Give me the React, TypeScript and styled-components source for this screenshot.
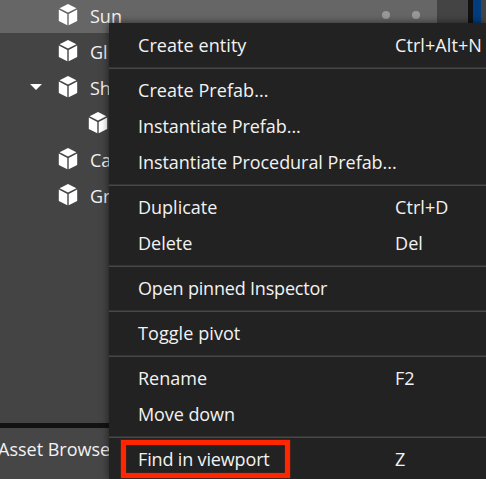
import React from "react";
import styled, { createGlobalStyle } from "styled-components";

const GlobalStyle = createGlobalStyle`
  * { box-sizing: border-box; }
  html, body { margin: 0; overflow: hidden; background: #444; }
`;

const Editor = styled.div`
  position: relative;
  display: flex;
  flex-direction: column;
  width: 486px;
  height: 479px;
  overflow: hidden;
  background: #121212;
  color: #f2f2f2;
  font: 18px/36px "Open Sans", sans-serif;
  white-space: nowrap;
`;

const Workspace = styled.div`
  display: flex;
  height: 423px;
  gap: 5px;
`;

const Hierarchy = styled.div`
  width: 468px;
  height: 423px;
  overflow: hidden;
  background: #444;
`;

const Viewport = styled.div`
  width: 13px;
  background: #003d7e;
  border-right: 5px solid #444;
`;

const TreeRow = styled.div<{ $depth?: number; $selected?: boolean }>`
  display: flex;
  align-items: flex-start;
  width: 437px;
  height: ${(p) => (p.$selected ? 33 : 36)}px;
  padding-top: ${(p) => (p.$selected ? 4 : 7)}px;
  padding-left: ${(p) => (p.$depth ? 60 : 30)}px;
  background: ${(p) => (p.$selected ? "#666" : "transparent")};
`;

const ArrowSlot = styled.span`
  display: flex;
  width: 28px;
  padding-top: 8px;
`;

const EntityName = styled.span`
  flex: 1;
  margin-left: 12px;
  line-height: 24px;
`;

const Dots = styled.span`
  display: flex;
  gap: 22px;
  margin-right: 17px;
  padding-top: 7px;
`;

const Dot = styled.i`
  width: 8px;
  height: 8px;
  border-radius: 50%;
  background: #999;
`;

const AssetPanel = styled.div`
  flex: 1;
  margin-top: 5px;
  padding-top: 3px;
  background: #464646;
  text-indent: -2px;
`;

const Menu = styled.div`
  position: absolute;
  left: 109px;
  top: 23px;
  width: 377px;
  height: 456px;
  padding-top: 4px;
  background: #222;
  box-shadow: 0 0 8px rgba(0, 0, 0, 0.6);
`;

const MenuItem = styled.div`
  display: grid;
  grid-template-columns: 257px 1fr;
  height: 36px;
  padding-left: 29px;
`;

const Label = styled.span<{ $tracking?: number }>`
  letter-spacing: ${(p) => p.$tracking ?? 0}px;
`;

const Shortcut = styled.span`
  letter-spacing: 0.08px;
`;

const Separator = styled.div`
  height: 9px;
  padding-top: 4px;

  &::before {
    content: "";
    display: block;
    height: 1px;
    background: #484848;
    border-top: 1px solid #343434;
  }
`;

const Highlight = styled.div`
  position: absolute;
  left: 12px;
  top: 417px;
  width: 169px;
  height: 38px;
  border: 5px solid #ff2600;
  box-shadow: 0 0 1px #ff2600, inset 0 0 1px #ff2600;
`;

const CubeIcon = () => (
  <svg width="20" height="22" viewBox="0 0 20 22" fill="#fff">
    <path d="M10 0 18.4 4.2 10 8.6 1.6 4.2Z" />
    <path d="M.8 5.6 9.3 10V21.3L.8 16.9Z" />
    <path d="M19.2 5.6 10.7 10V21.3L19.2 16.9Z" />
  </svg>
);

const Entity = ({ name, depth, selected, open }: {
  name?: string; depth?: number; selected?: boolean; open?: boolean;
}) => (
  <TreeRow $depth={depth} $selected={selected}>
    <ArrowSlot>
      {open && (
        <svg width="12" height="6" viewBox="0 0 12 6"><path d="M0 0H12L6 6Z" fill="#fff" /></svg>
      )}
    </ArrowSlot>
    <CubeIcon />
    <EntityName>{name}</EntityName>
    {selected && <Dots><Dot /><Dot /></Dots>}
  </TreeRow>
);

type Item = { label: string; keys?: string; tracking?: number };

const groups: Item[][] = [
  [{ label: "Create entity", keys: "Ctrl+Alt+N", tracking: 0.07 }],
  [
    { label: "Create Prefab...", tracking: 0.06 },
    { label: "Instantiate Prefab...", tracking: -0.05 },
    { label: "Instantiate Procedural Prefab...", tracking: -0.05 },
  ],
  [{ label: "Duplicate", keys: "Ctrl+D" }, { label: "Delete", keys: "Del" }],
  [{ label: "Open pinned Inspector", tracking: -0.19 }],
  [{ label: "Toggle pivot", tracking: 0.08 }],
  [{ label: "Rename", keys: "F2" }, { label: "Move down", tracking: -0.08 }],
  [{ label: "Find in viewport", keys: "Z", tracking: -0.15 }],
];

export default function App() {
  return (
    <>
      <GlobalStyle />
      <Editor>
        <Workspace>
          <Hierarchy>
            <Entity name="Sun" selected />
            <Entity name="Gl" />
            <Entity name="Sh" open />
            <Entity depth={1} />
            <Entity name="Ca" />
            <Entity name="Gr" />
          </Hierarchy>
          <Viewport />
        </Workspace>
        <AssetPanel>Asset Browse</AssetPanel>
        <Menu>
          {groups.map((items, i) => (
            <React.Fragment key={i}>
              {i > 0 && <Separator />}
              {items.map(({ label, keys, tracking }) => (
                <MenuItem key={label}>
                  <Label $tracking={tracking}>{label}</Label>
                  {keys && <Shortcut>{keys}</Shortcut>}
                </MenuItem>
              ))}
            </React.Fragment>
          ))}
          <Highlight />
        </Menu>
      </Editor>
    </>
  );
}
